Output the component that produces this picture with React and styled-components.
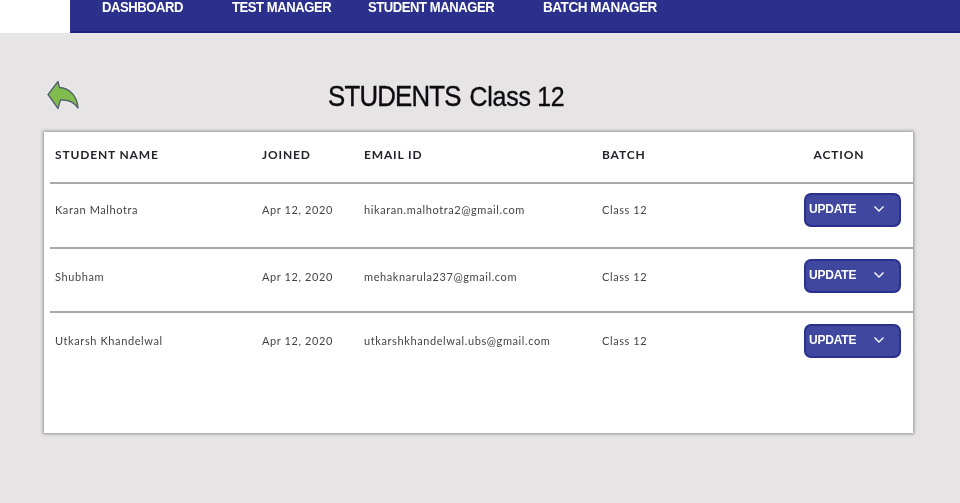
import React from "react";
import styled, { createGlobalStyle } from "styled-components";

const Global = createGlobalStyle`
    html, body {
        margin: 0;
        padding: 0;
        height: 100%;
        background: #e6e4e5;
        overflow: hidden;
    }
`, Page = styled.div`
    width: 960px;
    height: 503px;
    overflow: hidden;
    font-family: "Lato", "Liberation Sans", sans-serif;
    filter: blur(0.35px);
`, TopBar = styled.header`
    display: flex;
    height: 33px;
`, LogoSpace = styled.div`
    width: 70px;
    background: #fff;
`, Nav = styled.nav`
    flex: 1;
    display: grid;
    grid-template-columns: 130px 136px 175px 1fr;
    align-items: end;
    padding: 0 0 20px 32px;
    background: #2a308c;
    border-bottom: 2px solid #1c2385;
    overflow: hidden;
    box-sizing: border-box;
`, NavLink = styled.a`
    display: block;
    height: 14px;
    line-height: 14px;
    font-family: "Liberation Sans", sans-serif;
    font-size: 15px;
    font-weight: 700;
    letter-spacing: -0.5px;
    color: #fff;
    white-space: nowrap;
    transform: scaleX(${p => p.$scale || 0.87});
    transform-origin: left;
`, TitleRow = styled.div`
    display: flex;
    align-items: center;
    height: 99px;
    padding-left: 46px;
`, BackIcon = styled.svg`
    width: 34px;
    height: 30px;
    margin-top: 25px;
    filter: drop-shadow(0 0 1px #fff);
`, Title = styled.h1`
    display: flex;
    align-items: baseline;
    margin: 27px 0 0 248px;
    font-family: "Liberation Sans", sans-serif;
    font-size: 29px;
    font-weight: 400;
    letter-spacing: -0.9px;
    color: #0c0c10;
    white-space: nowrap;
    -webkit-text-stroke: 0.4px #0c0c10;
    transform: scaleX(0.89);
    transform-origin: left;
`, TitleSub = styled.span`
    margin-left: 10px;
    font-size: 28px;
    letter-spacing: -0.3px;
`, Card = styled.section`
    width: 869px;
    height: 301px;
    margin-left: 44px;
    background: #fff;
    box-shadow: 0 0 3px 1px rgba(80, 80, 80, 0.55);
`, Row = styled.div`
    display: grid;
    grid-template-columns: 207px 102px 238px 1fr 97px;
    align-items: center;
    box-sizing: border-box;
    height: ${p => p.$height}px;
    margin-left: 6px;
    padding: 0 12px ${p => p.$pb || 0}px 5px;
    border-bottom: 2px solid #a9a9a9;
`, Head = styled.div`
    font-family: "Lato", sans-serif;
    font-size: 12px;
    font-weight: 700;
    letter-spacing: 0.85px;
    color: #23232b;
    white-space: nowrap;
    text-align: ${p => p.$center ? "center" : "left"};
    margin-right: ${p => p.$center ? "27px" : "0"};
`, Cell = styled.div`
    font-size: 11px;
    letter-spacing: 0.6px;
    color: #444;
    white-space: nowrap;
`, LastRow = styled(Row)`
    border-bottom: none;
`, UpdateButton = styled.button`
    display: flex;
    align-items: center;
    justify-content: space-between;
    box-sizing: border-box;
    width: 97px;
    height: 34px;
    padding: 0 14px 2px 3px;
    background: #3f479f;
    border: 2px solid #2a308c;
    border-radius: 7px;
    color: #fff;
    font-family: "Liberation Sans", sans-serif;
    font-size: 12px;
    font-weight: 700;
    letter-spacing: -0.2px;
`, Chevron = styled.svg`
    width: 12px;
    height: 8px;
`

const students = [
    { name: "Karan Malhotra", email: "hikaran.malhotra2@gmail.com", height: 65, pb: 12 },
    { name: "Shubham", email: "mehaknarula237@gmail.com", height: 64, pb: 8 },
    { name: "Utkarsh Khandelwal", email: "utkarshkhandelwal.ubs@gmail.com", height: 64, pb: 9 },
]

export default function App() {
    return (
        <Page>
            <Global />
            <TopBar>
                <LogoSpace />
                <Nav>
                    <NavLink>DASHBOARD</NavLink>
                    <NavLink>TEST MANAGER</NavLink>
                    <NavLink>STUDENT MANAGER</NavLink>
                    <NavLink $scale={0.9}>BATCH MANAGER</NavLink>
                </Nav>
            </TopBar>
            <TitleRow>
                <BackIcon viewBox="0 0 34 30">
                    <path
                        d="M2 14.5 L12 1.5 L13.5 7.5 C24 8 31.5 17 32 28 C28.5 22.5 22 19.5 14.5 20 L12 28.5 Z"
                        fill="#7fbc4c"
                        stroke="#56626e"
                        strokeWidth="1.4"
                        strokeLinejoin="round"
                    />
                </BackIcon>
                <Title>STUDENTS<TitleSub>Class 12</TitleSub></Title>
            </TitleRow>
            <Card>
                <Row $height={52} $pb={5}>
                    <Head>STUDENT NAME</Head>
                    <Head>JOINED</Head>
                    <Head>EMAIL ID</Head>
                    <Head>BATCH</Head>
                    <Head $center>ACTION</Head>
                </Row>
                {students.map((s, i) => {
                    const RowTag = i === students.length - 1 ? LastRow : Row
                    return (
                        <RowTag key={s.email} $height={s.height} $pb={s.pb}>
                            <Cell>{s.name}</Cell>
                            <Cell>Apr 12, 2020</Cell>
                            <Cell>{s.email}</Cell>
                            <Cell>Class 12</Cell>
                            <UpdateButton>
                                UPDATE
                                <Chevron viewBox="0 0 12 8">
                                    <path d="M1.5 1.5 L6 6 L10.5 1.5" fill="none" stroke="#fff" strokeWidth="1.4" />
                                </Chevron>
                            </UpdateButton>
                        </RowTag>
                    )
                })}
            </Card>
        </Page>
    )
}
